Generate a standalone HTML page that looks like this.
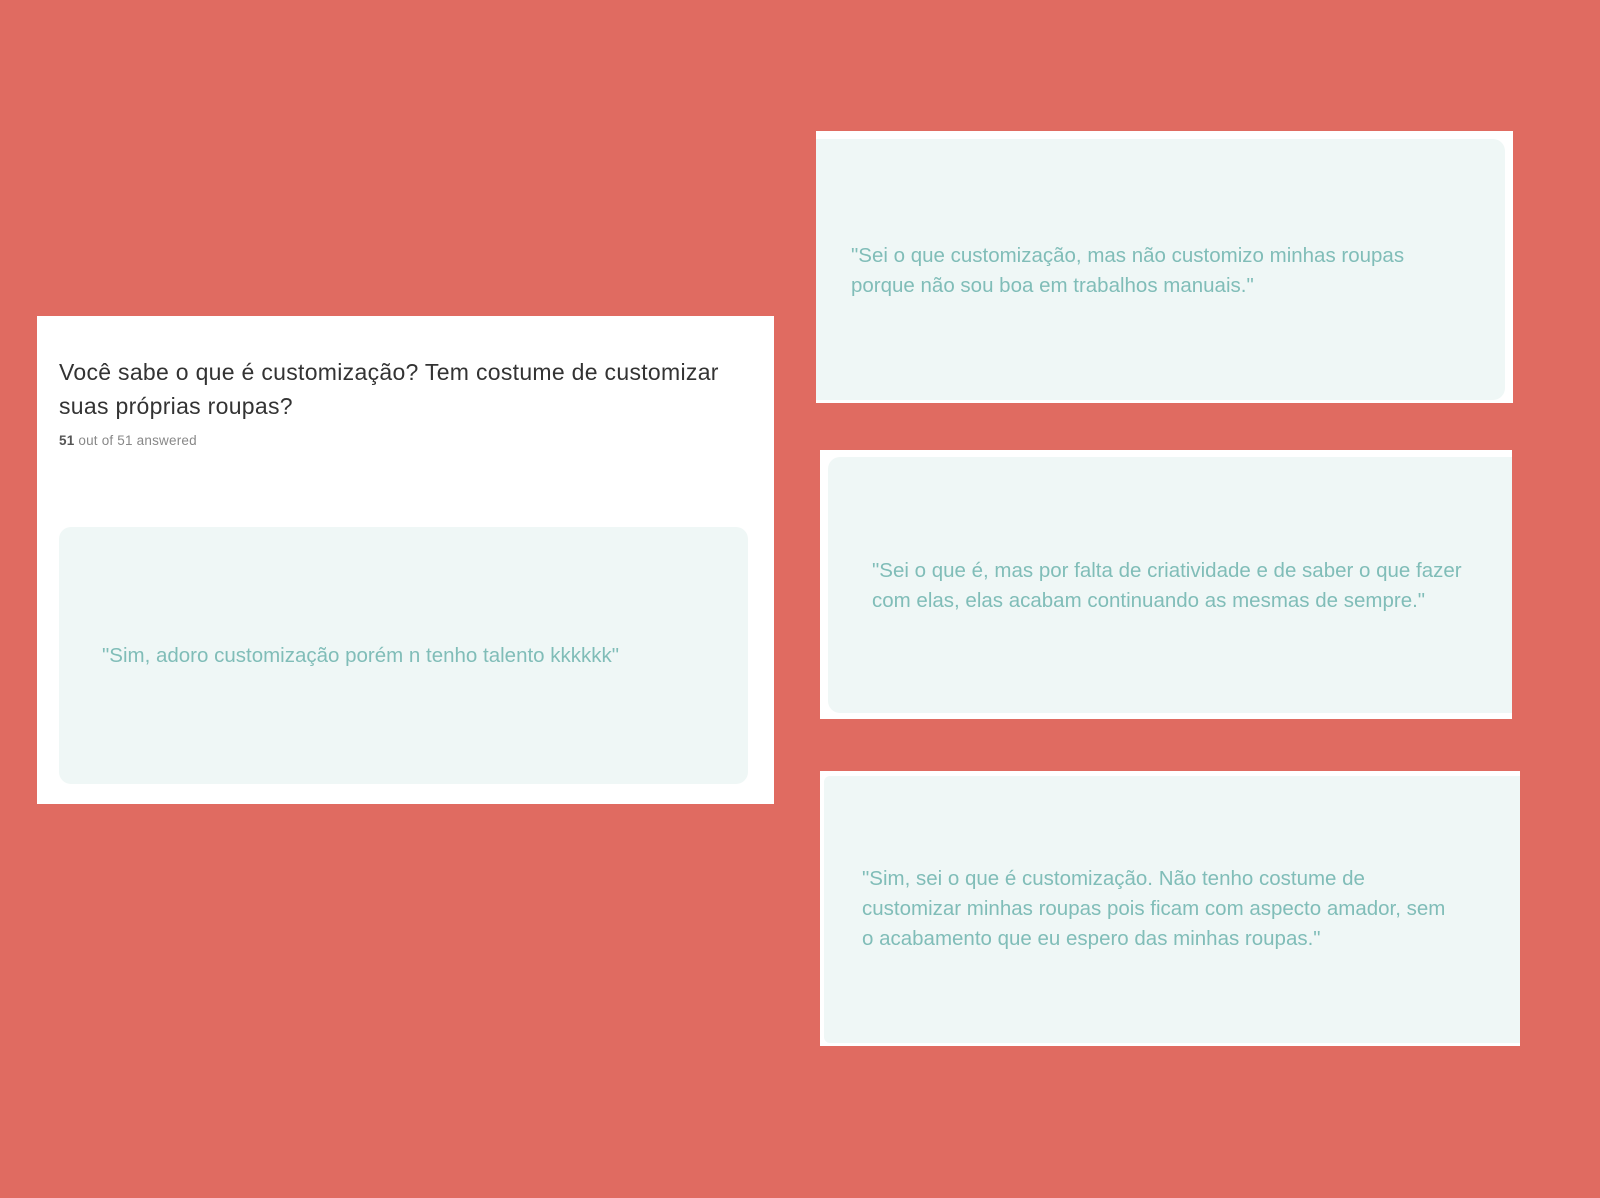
<!DOCTYPE html>
<html><head><meta charset="utf-8"><style>
body{margin:0;width:1600px;height:1198px;background:#e06b61;position:relative;overflow:hidden;font-family:"Liberation Sans",sans-serif}
.w{position:absolute;background:#fff}
.i{position:absolute;background:#eff7f6}
.t{position:absolute;color:#80bdb8;font-size:20.5px;line-height:30px;letter-spacing:0px;white-space:nowrap}
</style></head><body>
<div class="w" style="left:37px;top:316px;width:737px;height:488px"></div>
<div style="position:absolute;left:59px;top:355px;color:#333;font-size:23px;line-height:34px;letter-spacing:0.3px;white-space:nowrap">Você sabe o que é customização? Tem costume de customizar<br>suas próprias roupas?</div>
<div style="position:absolute;left:59px;top:433px;color:#888;font-size:13.5px;letter-spacing:0.2px"><b style="color:#555">51</b> out of 51 answered</div>
<div class="i" style="left:59px;top:527px;width:689px;height:257px;border-radius:12px"></div>
<div class="t" style="left:102px;top:641px">"Sim, adoro customização porém n tenho talento kkkkkk"</div>

<div class="w" style="left:816px;top:131px;width:697px;height:272px"></div>
<div class="i" style="left:816px;top:139px;width:689px;height:261px;border-radius:0 12px 12px 0"></div>
<div class="t" style="left:851px;top:241px">"Sei o que customização, mas não customizo minhas roupas<br>porque não sou boa em trabalhos manuais."</div>

<div class="w" style="left:820px;top:450px;width:692px;height:269px"></div>
<div class="i" style="left:828px;top:457px;width:684px;height:256px;border-radius:12px 0 0 12px"></div>
<div class="t" style="left:872px;top:556px">"Sei o que é, mas por falta de criatividade e de saber o que fazer<br>com elas, elas acabam continuando as mesmas de sempre."</div>

<div class="w" style="left:820px;top:771px;width:700px;height:275px"></div>
<div class="i" style="left:824px;top:776px;width:696px;height:267px;border-radius:6px 0 0 6px"></div>
<div class="t" style="left:862px;top:864px">"Sim, sei o que é customização. Não tenho costume de<br>customizar minhas roupas pois ficam com aspecto amador, sem<br>o acabamento que eu espero das minhas roupas."</div>
</body></html>
